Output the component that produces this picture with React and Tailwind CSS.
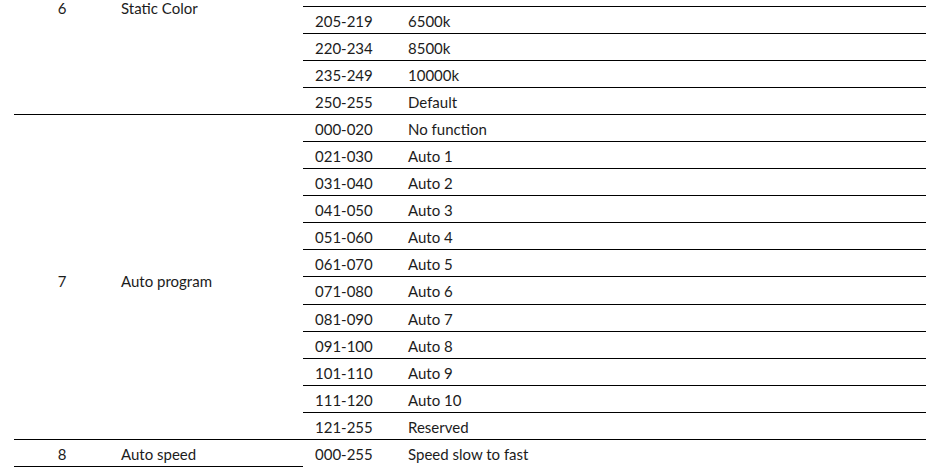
const channels = [
  {
    ch: '6',
    name: 'Static Color',
    top: true,
    rows: [
      ['205-219', '6500k'],
      ['220-234', '8500k'],
      ['235-249', '10000k'],
      ['250-255', 'Default'],
    ],
  },
  {
    ch: '7',
    name: 'Auto program',
    rows: [
      ['000-020', 'No function'],
      ['021-030', 'Auto 1'],
      ['031-040', 'Auto 2'],
      ['041-050', 'Auto 3'],
      ['051-060', 'Auto 4'],
      ['061-070', 'Auto 5'],
      ['071-080', 'Auto 6'],
      ['081-090', 'Auto 7'],
      ['091-100', 'Auto 8'],
      ['101-110', 'Auto 9'],
      ['111-120', 'Auto 10'],
      ['121-255', 'Reserved'],
    ],
  },
  {
    ch: '8',
    name: 'Auto speed',
    rows: [['000-255', 'Speed slow to fast']],
  },
];

function Cell({ children }) {
  return <td className="border-t border-black pl-[12px] pt-[3px] leading-none whitespace-nowrap">{children}</td>;
}

export default function App() {
  return (
    <div className="w-[928px] h-[475px] overflow-hidden bg-white text-[#1c1c1c] font-['Lato',sans-serif] text-[15px]">
      <table className="ml-[14px] w-[912px] border-collapse table-fixed">
        <colgroup>
          <col className="w-[96px]" />
          <col className="w-[193px]" />
          <col className="w-[93px]" />
          <col />
        </colgroup>
        <tbody>
          {channels.map((c) => {
            const span = c.rows.length + (c.top ? 1 : 0);
            const head = (
              <>
                <td
                  rowSpan={span}
                  className={c.top
                    ? 'border-b border-black text-center align-top leading-none pt-[1px]'
                    : c.ch === '7'
                      ? 'border-y border-black text-center align-middle leading-none pt-[9px]'
                      : 'border-y border-black text-center align-middle leading-none pt-[3px]'}
                >
                  {c.ch}
                </td>
                <td
                  rowSpan={span}
                  className={c.top
                    ? 'border-b border-black pl-[11px] align-top leading-none pt-[1px]'
                    : c.ch === '7'
                      ? 'border-y border-black pl-[11px] align-middle leading-none pt-[9px]'
                      : 'border-y border-black pl-[11px] align-middle leading-none pt-[3px]'}
                >
                  {c.name}
                </td>
              </>
            );
            return (
              <>
                {c.top && (
                  <tr key={c.ch + 'top'} className="h-[6px]">
                    {head}
                    <td />
                    <td />
                  </tr>
                )}
                {c.rows.map(([range, fn], i) => (
                  <tr key={c.ch + range} className="h-[27.1px]">
                    {i === 0 && !c.top && head}
                    <Cell>{range}</Cell>
                    <Cell>{fn}</Cell>
                  </tr>
                ))}
              </>
            );
          })}
        </tbody>
      </table>
    </div>
  );
}
